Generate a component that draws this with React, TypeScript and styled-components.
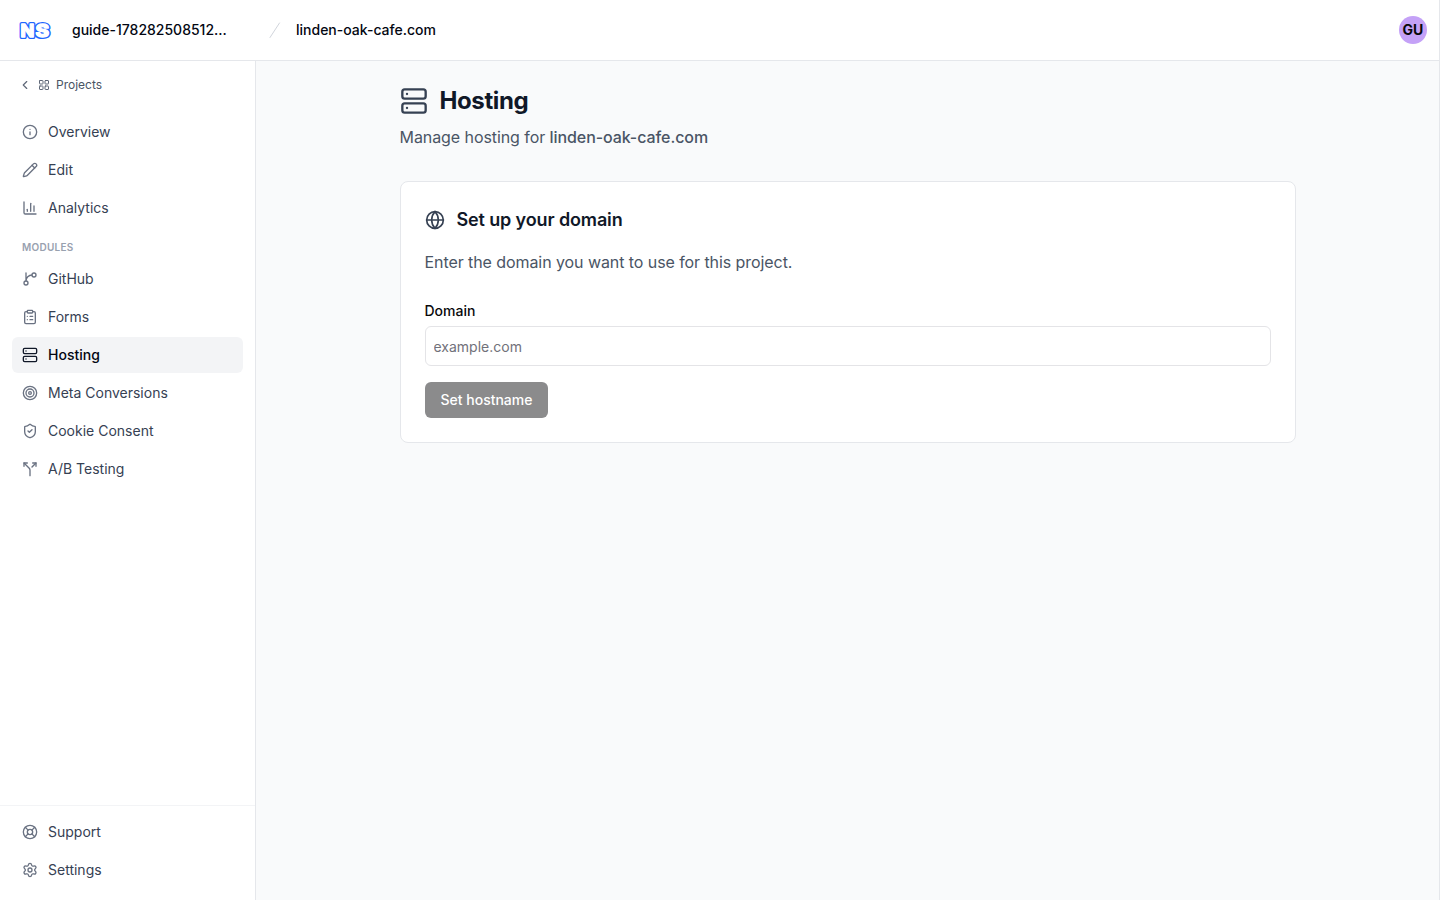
import React from "react";
import styled, { createGlobalStyle } from "styled-components";
import {
  ChartColumn,
  ChevronLeft,
  ClipboardList,
  Globe,
  Info,
  LayoutGrid,
  LifeBuoy,
  Pencil,
  Server,
  Settings,
  ShieldCheck,
  Split,
  Target,
} from "lucide-react";

const GlobalStyle = createGlobalStyle`
  *, *::before, *::after { box-sizing: border-box; }
  body { margin: 0; background: #f9fafb; font-family: Inter, sans-serif; color: #09090b; }
  h1, h2, p { margin: 0; }
  a { color: inherit; text-decoration: none; }
`;

const Page = styled.div`
  display: flex;
  flex-direction: column;
  height: 100vh;
  border-right: 1px solid #e5e7eb;
  overflow: hidden;
`;

const Header = styled.header`
  display: flex;
  align-items: center;
  flex: none;
  height: 61px;
  padding: 0 12px 1px 18px;
  background: #fff;
  border-bottom: 1px solid #e5e7eb;
`;

const Logo = styled.svg`
  display: block;
  flex: none;
  width: 34px;
  height: 24px;
  margin-right: 20px;
`;

const LogoText = styled.text<{ $outline?: boolean }>`
  font-family: Inter, sans-serif;
  font-weight: 800;
  font-size: 18px;
  fill: #fff;
  stroke: ${(p) => (p.$outline ? "#1f66ff" : "#fff")};
  stroke-width: ${(p) => (p.$outline ? 4 : 1.3)}px;
  stroke-linejoin: round;
`;

const Crumb = styled.span<{ $width?: number }>`
  width: ${(p) => (p.$width ? `${p.$width}px` : "auto")};
  font-size: 14px;
  line-height: 20px;
  font-weight: 500;
  color: #030712;
  white-space: nowrap;
`;

const Slash = styled.svg`
  width: 24px;
  height: 24px;
  margin-right: 9px;
  color: #d1d5dc;
`;

const Avatar = styled.div`
  display: grid;
  place-items: center;
  width: 28px;
  height: 28px;
  margin-left: auto;
  border-radius: 50%;
  background: #c4a1f7;
  color: #09090b;
  font-size: 14px;
  font-weight: 700;
`;

const Body = styled.div`
  display: flex;
  flex: 1;
  min-height: 0;
`;

const Sidebar = styled.aside`
  display: flex;
  flex-direction: column;
  flex: none;
  width: 256px;
  background: #fff;
  border-right: 1px solid #e5e7eb;
`;

const BackLink = styled.a`
  display: flex;
  align-items: center;
  gap: 6px;
  height: 16px;
  margin: 16px 0 21px 18px;
  font-size: 12px;
  line-height: 16px;
  color: #4a5565;

  svg { color: #5f6878; }
`;

const NavGroup = styled.nav`
  display: flex;
  flex-direction: column;
  gap: 2px;
  padding: 0 12px;
`;

const NavLink = styled.a<{ $active?: boolean }>`
  display: flex;
  align-items: center;
  gap: 10px;
  height: 36px;
  padding: 0 10px;
  border-radius: 6px;
  font-size: 14px;
  line-height: 20px;
  font-weight: ${(p) => (p.$active ? 500 : 400)};
  color: ${(p) => (p.$active ? "#030712" : "#364153")};
  background: ${(p) => (p.$active ? "#f3f4f6" : "transparent")};

  svg { color: ${(p) => (p.$active ? "#101828" : "#6a7282")}; }
`;

const GroupTitle = styled.div`
  margin: 13px 22px 6px;
  height: 16px;
  font-size: 10px;
  line-height: 16px;
  font-weight: 600;
  letter-spacing: 0.25px;
  color: #99a1af;
`;

const SidebarFooter = styled.div`
  margin-top: auto;
  padding: 8px 0 12px;
  border-top: 1px solid #f3f4f6;
`;

const Main = styled.main`
  flex: 1;
  background: #f9fafb;
`;

const Content = styled.div`
  width: 896px;
  margin: 0 auto;
  padding-top: 24px;
`;

const TitleRow = styled.div`
  display: flex;
  align-items: center;
  gap: 12px;
  height: 32px;
  color: #364153;
`;

const Title = styled.h1`
  font-size: 24px;
  line-height: 32px;
  font-weight: 700;
  letter-spacing: -0.4px;
  color: #101828;
`;

const Subtitle = styled.p`
  margin-top: 8px;
  font-size: 16px;
  line-height: 24px;
  letter-spacing: -0.075px;
  color: #4a5565;

  strong { font-weight: 500; }
`;

const Card = styled.section`
  margin-top: 32px;
  padding: 24px;
  background: #fff;
  border: 1px solid #e5e7eb;
  border-radius: 8px;
`;

const CardHeader = styled.div`
  display: flex;
  align-items: center;
  gap: 12px;
  height: 28px;
  color: #364153;
`;

const CardTitle = styled.h2`
  font-size: 18px;
  line-height: 28px;
  font-weight: 600;
  letter-spacing: -0.13px;
  color: #101828;
`;

const CardText = styled.p`
  margin-top: 16px;
  font-size: 16px;
  line-height: 24px;
  letter-spacing: -0.075px;
  color: #4a5565;
`;

const Label = styled.label`
  display: block;
  margin-top: 30px;
  font-size: 14px;
  line-height: 14px;
  font-weight: 500;
`;

const Input = styled.input`
  display: block;
  width: 100%;
  height: 40px;
  margin-top: 8px;
  padding: 0 8px;
  border: 1px solid #e4e4e7;
  border-radius: 6px;
  background: #fff;
  font: 400 14px/20px Inter, sans-serif;

  &::placeholder { color: #71717a; opacity: 1; }
`;

const Button = styled.button`
  display: block;
  height: 36px;
  margin-top: 16px;
  padding: 0 16px;
  border: 0;
  border-radius: 6px;
  background: #8b8b8c;
  color: #fff;
  font: 500 14px/20px Inter, sans-serif;
`;

function BranchIcon({ size = 24 }: { size?: number | string }) {
  return (
    <svg
      width={size}
      height={size}
      viewBox="0 0 24 24"
      fill="none"
      stroke="currentColor"
      strokeWidth="2"
      strokeLinecap="round"
      strokeLinejoin="round"
    >
      <path d="M15 6a9 9 0 0 0-9 9V3" />
      <circle cx="18" cy="6" r="3" />
      <circle cx="6" cy="18" r="3" />
    </svg>
  );
}

type Item = {
  label: string;
  icon: React.ComponentType<{ size?: number | string }>;
  active?: boolean;
};

const mainItems: Item[] = [
  { label: "Overview", icon: Info },
  { label: "Edit", icon: Pencil },
  { label: "Analytics", icon: ChartColumn },
];

const moduleItems: Item[] = [
  { label: "GitHub", icon: BranchIcon },
  { label: "Forms", icon: ClipboardList },
  { label: "Hosting", icon: Server, active: true },
  { label: "Meta Conversions", icon: Target },
  { label: "Cookie Consent", icon: ShieldCheck },
  { label: "A/B Testing", icon: Split },
];

const footerItems: Item[] = [
  { label: "Support", icon: LifeBuoy },
  { label: "Settings", icon: Settings },
];

function Nav({ items }: { items: Item[] }) {
  return (
    <NavGroup>
      {items.map(({ label, icon: Icon, active }) => (
        <NavLink key={label} href="#" $active={active}>
          <Icon size={16} />
          {label}
        </NavLink>
      ))}
    </NavGroup>
  );
}

export default function App() {
  return (
    <Page>
      <GlobalStyle />
      <Header>
        <Logo viewBox="0 0 34 24" aria-label="NS">
          <LogoText $outline x="2.4" y="19.3">N</LogoText>
          <LogoText $outline x="17.4" y="19.3" textLength="13.6" lengthAdjust="spacingAndGlyphs">S</LogoText>
          <LogoText x="2.4" y="19.3">N</LogoText>
          <LogoText x="17.4" y="19.3" textLength="13.6" lengthAdjust="spacingAndGlyphs">S</LogoText>
        </Logo>
        <Crumb $width={191}>guide-178282508512...</Crumb>
        <Slash viewBox="0 0 24 24" fill="none" stroke="currentColor" strokeWidth="1">
          <path d="M16.5 5 7 19.5" strokeLinecap="round" />
        </Slash>
        <Crumb>linden-oak-cafe.com</Crumb>
        <Avatar>GU</Avatar>
      </Header>
      <Body>
        <Sidebar>
          <BackLink href="#">
            <ChevronLeft size={14} />
            <LayoutGrid size={12} />
            Projects
          </BackLink>
          <Nav items={mainItems} />
          <GroupTitle>MODULES</GroupTitle>
          <Nav items={moduleItems} />
          <SidebarFooter>
            <Nav items={footerItems} />
          </SidebarFooter>
        </Sidebar>
        <Main>
          <Content>
            <TitleRow>
              <Server size={28} />
              <Title>Hosting</Title>
            </TitleRow>
            <Subtitle>
              Manage hosting for <strong>linden-oak-cafe.com</strong>
            </Subtitle>
            <Card>
              <CardHeader>
                <Globe size={20} />
                <CardTitle>Set up your domain</CardTitle>
              </CardHeader>
              <CardText>Enter the domain you want to use for this project.</CardText>
              <Label htmlFor="domain">Domain</Label>
              <Input id="domain" placeholder="example.com" />
              <Button type="button">Set hostname</Button>
            </Card>
          </Content>
        </Main>
      </Body>
    </Page>
  );
}
